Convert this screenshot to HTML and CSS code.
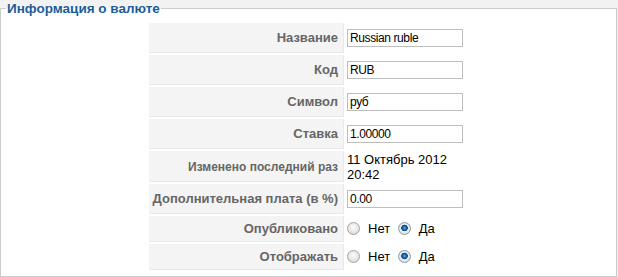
FILE: index.html
```html
<!DOCTYPE html>
<html lang="ru">
<head>
<meta charset="utf-8" />
<title>Информация о валюте</title>
<link rel="stylesheet" href="styles.css">
</head>
<body>
<fieldset class="adminform">
  <legend>Информация о валюте</legend>
  <table class="admintable">
    <tr>
      <td class="key">Название</td>
      <td class="val"><input type="text" class="inputbox" value="Russian ruble" /></td>
    </tr>
    <tr>
      <td class="key">Код</td>
      <td class="val"><input type="text" class="inputbox" value="RUB" /></td>
    </tr>
    <tr>
      <td class="key">Символ</td>
      <td class="val"><input type="text" class="inputbox" value="руб" /></td>
    </tr>
    <tr>
      <td class="key">Ставка</td>
      <td class="val"><input type="text" class="inputbox" value="1.00000" /></td>
    </tr>
    <tr class="row-date">
      <td class="key"><span class="key-small">Изменено последний раз</span></td>
      <td class="val date">11 Октябрь 2012 20:42</td>
    </tr>
    <tr>
      <td class="key">Дополнительная плата (в %)</td>
      <td class="val"><input type="text" class="inputbox" value="0.00" /></td>
    </tr>
    <tr class="row-radio">
      <td class="key">Опубликовано</td>
      <td class="val">
        <label class="opt"><input type="radio" name="published" value="0" />Нет</label>
        <label class="opt"><input type="radio" name="published" value="1" checked />Да</label>
      </td>
    </tr>
    <tr class="row-radio">
      <td class="key">Отображать</td>
      <td class="val">
        <label class="opt"><input type="radio" name="display" value="0" />Нет</label>
        <label class="opt"><input type="radio" name="display" value="1" checked />Да</label>
      </td>
    </tr>
  </table>
</fieldset>
</body>
</html>
```
FILE: styles.css
```css
*{margin:0px; padding:0px;}
body{
	background-color:#f2f2f2;
	font-family:"Liberation Sans", Arial, sans-serif;
	font-size:13px;
	color:#000;
}
.adminform{
	width:615px;
	background-color:#fff;
	border:1px solid #cccccc;
	padding:4px 0 4px 0;
}
.adminform legend{
	margin-left:5px;
	padding:0 1px;
	color:#1b5c9b;
	font-size:13.5px;
	font-weight:bold;
	line-height:17px;
}
.admintable{
	margin:0 auto 0 148px;
	border-collapse:separate;
	border-spacing:0 2px;
}
.admintable td{
	height:29px;
	vertical-align:middle;
}
.key{
	width:188px;
	padding:0 5px 0 1px;
	background-color:#f4f4f4;
	border-bottom:1px solid #e9e9e9;
	border-right:1px solid #e9e9e9;
	text-align:right;
	white-space:nowrap;
	font-weight:bold;
	color:#666;
}
.key-small{
	font-size:12px;
}
.val{
	width:116px;
	padding:0 3px;
}
.row-date td{
	height:30px;
}
.date{
	line-height:15px;
	padding-top:1px;
}
.row-radio td{
	height:25px;
}
.inputbox{
	display:block;
	width:116px;
	height:18px;
	padding:0 2px;
	box-sizing:border-box;
	border:1px solid #bdbdbd;
	font-family:"Liberation Sans", Arial, sans-serif;
	font-size:12px;
	letter-spacing:-0.4px;
	color:#000;
	outline:none;
}
.opt{
	display:inline-flex;
	align-items:center;
	white-space:nowrap;
	margin-right:4px;
}
.opt input{
	-webkit-appearance:none;
	appearance:none;
	width:13px;
	height:13px;
	margin:0 8px 0 0;
	border:1px solid #a3a3a3;
	border-radius:50%;
	background:radial-gradient(circle at 50% 40%, #fcfcfc 0, #e4e4e4 60%, #cfcfcf 100%);
	box-sizing:border-box;
}
.opt input:checked{
	border-color:#8d9aa6;
	background:radial-gradient(circle at 50% 45%, #5fb2ef 0, #1d6fb8 1.5px, #0e477f 3px, #e9eef2 3.6px, #d0d7dd 100%);
}
```
